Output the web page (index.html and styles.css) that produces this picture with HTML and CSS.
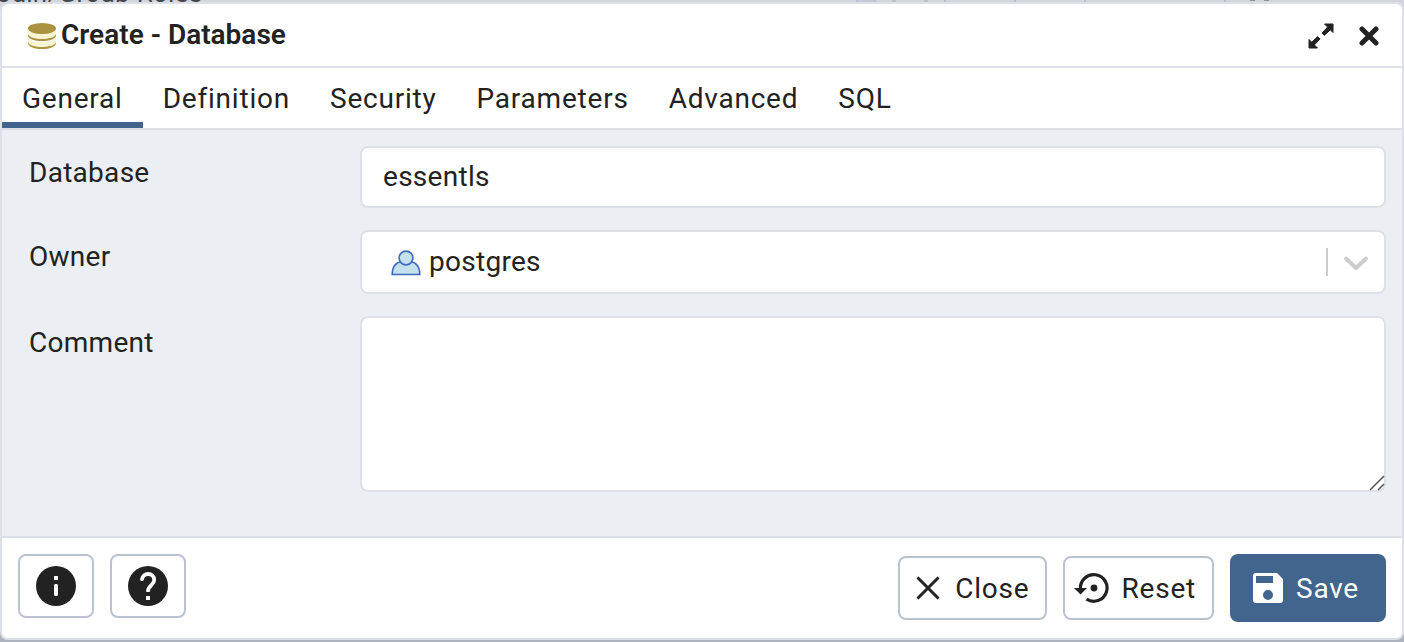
FILE: index.html
```html
<!DOCTYPE html>
<html lang="en">
<head>
  <meta charset="utf-8">
  <meta name="viewport" content="width=device-width, initial-scale=1">
  <title>Create - Database</title>
  <link rel="stylesheet" href="styles.css">
</head>
<body class="page">
  <div class="backdrop" aria-hidden="true">
    <span class="backdrop-node">Login/Group Roles</span>
    <svg class="backdrop-grid" width="480" height="2" viewBox="0 0 480 2">
      <path fill="#c2cad8" d="M16 0h20v2H16z"/>
      <path fill="#b9c0ca" d="M16 0h2v2h-2zM34 0h2v2h-2zM52 0h4v2h-4zM84 0h4v2h-4zM104 0h2v2h-2zM174 0h2v2h-2zM244 0h2v2h-2zM384 0h2v2h-2z"/>
      <path fill="#8d9299" d="M410 0h5v1h-5zM424 0h5v1h-5z"/>
    </svg>
  </div>

  <div class="dialog" role="dialog" aria-labelledby="dialog-title">
    <header class="dialog-header">
      <svg class="icon" width="28" height="26" viewBox="0 0 28 26" aria-hidden="true">
        <path fill="#f8f6d0" d="M0 5h28v15c0 3.500-6 6-14 6S0 23.500 0 20z"/>
        <path fill="#fff" d="M0 12.500c2 3.200 7 4.700 14 4.700s12-1.500 14-4.700v2.500c-2 3-7 4.300-14 4.300S2 18 0 15z"/>
        <path fill="#ab9240" d="M0 11.500c2 3 7 4.500 14 4.500s12-1.500 14-4.500v1.500c-1 3.300-6.500 5-14 5S1 16.300 0 13zM0 19.500c2 3 7 4.500 14 4.500s12-1.500 14-4.500v1c-1 3.500-6.500 5.500-14 5.500S1 24 0 20.500z"/>
        <ellipse cx="14" cy="5.500" rx="14" ry="5.500" fill="#ab9240"/>
      </svg>
      <h1 class="dialog-title" id="dialog-title">Create - Database</h1>
      <div class="window-actions">
        <button class="icon-button" type="button" aria-label="Maximize">
          <svg class="icon" width="26" height="26" viewBox="0 0 26 26" aria-hidden="true">
            <g fill="#222" stroke="#222" stroke-linejoin="round" stroke-width="1">
              <path d="M16.500 1H25v8.500l-2.700-2.700-6 5.600-2.300-2.300 5.600-6z"/>
              <path d="M9.500 25H1v-8.500l2.700 2.700 6-5.600 2.300 2.300-5.600 6z"/>
            </g>
          </svg>
        </button>
        <button class="icon-button" type="button" aria-label="Close dialog">
          <svg class="icon" width="20" height="20" viewBox="0 0 20 20" aria-hidden="true">
            <path fill="none" stroke="#222" stroke-width="5" stroke-linecap="round" d="m3 3 14 14M17 3 3 17"/>
          </svg>
        </button>
      </div>
    </header>

    <div class="tabs" role="tablist">
      <button class="tab tab-active" type="button" role="tab" aria-selected="true">General</button>
      <button class="tab" type="button" role="tab" aria-selected="false">Definition</button>
      <button class="tab" type="button" role="tab" aria-selected="false">Security</button>
      <button class="tab" type="button" role="tab" aria-selected="false">Parameters</button>
      <button class="tab" type="button" role="tab" aria-selected="false">Advanced</button>
      <button class="tab" type="button" role="tab" aria-selected="false">SQL</button>
    </div>

    <form class="form" id="database-form">
      <div class="field">
        <label class="label" for="database">Database</label>
        <input class="control text-control" id="database" type="text" value="essentls">
      </div>
      <div class="field">
        <label class="label" for="owner">Owner</label>
        <div class="control-wrap">
          <select class="control select-control" id="owner">
            <option>postgres</option>
          </select>
          <svg class="owner-icon" width="30" height="26" viewBox="0 0 30 26" aria-hidden="true">
            <g fill="#c5e1ee" stroke="#3f69be" stroke-width="1.600">
              <path d="M1.200 24.500C1.200 16 6 11 15 11s13.800 5 13.800 13.500z"/>
              <circle cx="15" cy="8" r="6.900"/>
            </g>
          </svg>
          <svg class="select-indicator" width="44" height="28" viewBox="0 0 44 28" aria-hidden="true">
            <path fill="#ccc" d="M0 0h2v28H0z"/>
            <path fill="none" stroke="#ccc" stroke-width="4" stroke-linecap="round" stroke-linejoin="round" d="m20 10.500 10 9.500 10-9.500"/>
          </svg>
        </div>
      </div>
      <div class="field">
        <label class="label" for="comment">Comment</label>
        <div class="control-wrap">
          <textarea class="control area-control" id="comment"></textarea>
          <svg class="resize-grip" width="16" height="16" viewBox="0 0 16 16" aria-hidden="true">
            <path fill="none" stroke="#555" stroke-width="1.500" d="M1 15 15 1M9 15l6-6"/>
          </svg>
        </div>
      </div>
    </form>

    <footer class="dialog-footer">
      <button class="button button-icon" type="button" aria-label="Information">
        <svg class="icon" width="40" height="40" viewBox="0 0 40 40" aria-hidden="true">
          <circle cx="20" cy="20" r="20" fill="#222"/>
          <path fill="#fff" d="M18 10h4v4h-4z"/>
          <rect x="18" y="18" width="4" height="12" rx="1.500" fill="#fff"/>
        </svg>
      </button>
      <button class="button button-icon" type="button" aria-label="Help">
        <svg class="icon" width="40" height="40" viewBox="0 0 40 40" aria-hidden="true">
          <circle cx="20" cy="20" r="20" fill="#222"/>
          <path fill="none" stroke="#fff" stroke-width="3.800" stroke-linecap="round" d="M14 13.200C14.500 10 17 8 20 8c3.600 0 6.200 2.600 6.200 6 0 5-6.200 5.700-6.200 11"/>
          <path fill="#222" d="M17 26h6v4h-6z"/>
          <path fill="#fff" d="M18 30h4v4h-4z"/>
        </svg>
      </button>
      <div class="footer-actions">
        <button class="button" type="button">
          <svg class="icon" width="24" height="24" viewBox="0 0 24 24" aria-hidden="true">
            <path fill="none" stroke="#222" stroke-width="3" d="m1.500 1.500 21 21M22.500 1.500l-21 21"/>
          </svg>
          <span class="button-text">Close</span>
        </button>
        <button class="button button-reset" type="reset" form="database-form">
          <svg class="icon" width="36" height="30" viewBox="0 0 36 30" aria-hidden="true">
            <path fill="none" stroke="#222" stroke-width="3.200" d="M6.500 16A13.300 13.300 0 1 1 12.500 26.100"/>
            <path fill="#222" d="M0 15h13l-6.500 6.500z"/>
            <circle cx="20" cy="15" r="3.400" fill="#222"/>
          </svg>
          <span class="button-text">Reset</span>
        </button>
        <button class="button button-primary" type="submit" form="database-form">
          <svg class="icon" width="30" height="30" viewBox="0 0 30 30" aria-hidden="true">
            <path fill="#fff" fill-rule="evenodd" d="M3 0h21l6 6v21a3 3 0 0 1-3 3H3a3 3 0 0 1-3-3V3a3 3 0 0 1 3-3zm0 3v7h17V3zm12 14a5 5 0 1 0 0 10 5 5 0 0 0 0-10z"/>
          </svg>
          <span class="button-text">Save</span>
        </button>
      </div>
    </footer>
  </div>
</body>
</html>
```
FILE: styles.css
```css
* {
  box-sizing: border-box;
}

.page {
  display: flex;
  min-height: 100vh;
  margin: 0;
  padding: 2px 0;
  background: linear-gradient(#d2d6dc, #adb4c0);
  color: #222;
  font: 28px/32px Roboto, sans-serif;
  letter-spacing: 0.01em;
}

.backdrop {
  position: absolute;
  inset: 0 0 auto;
  height: 4px;
  overflow: hidden;
}

.backdrop-node {
  position: absolute;
  bottom: -5px;
  left: -18px;
  color: #44474c;
  font-size: 26px;
}

.backdrop-grid {
  position: absolute;
  top: 0;
  left: 840px;
}

.dialog {
  position: relative;
  display: flex;
  flex: 1;
  flex-direction: column;
  min-width: 0;
  overflow: hidden;
  border: 2px solid #dde0e6;
  border-radius: 8px;
  background: #fff;
}

.icon {
  display: block;
  flex: none;
}

.dialog-header {
  display: flex;
  align-items: center;
  gap: 5px;
  padding: 16px 23px 14px 26px;
  border-bottom: 2px solid #dde0e6;
}

.dialog-title {
  margin: 0;
  padding-bottom: 2px;
  font-size: 28px;
  font-weight: 600;
  line-height: 30px;
  letter-spacing: 0;
}

.window-actions {
  display: flex;
  align-items: center;
  gap: 25px;
  margin-left: auto;
}

.icon-button {
  padding: 0;
  border: 0;
  background: none;
}

.tabs {
  display: flex;
  border-bottom: 2px solid #dde0e6;
}

.tab {
  padding: 15px 20px 7px;
  border: 0;
  border-bottom: 6px solid transparent;
  background: none;
  color: inherit;
  font: inherit;
  letter-spacing: 0.028em;
}

.tab-active {
  border-bottom-color: #41658c;
}

.form {
  display: flex;
  flex: 1;
  flex-direction: column;
  gap: 22px;
  padding: 16px 16px 44px;
  background: #ebeef3;
}

.field {
  display: grid;
  grid-template-columns: 1fr 3fr;
}

.label {
  padding: 11px;
}

.control-wrap {
  position: relative;
  display: flex;
}

.control {
  display: block;
  width: 100%;
  min-width: 0;
  margin: 0;
  border: 2px solid #dde0e6;
  border-radius: 8px;
  outline: 0;
  background: #fff;
  color: inherit;
  font: inherit;
  letter-spacing: inherit;
}

.text-control {
  height: 62px;
  padding: 0 21px 2px;
}

.select-control {
  height: 64px;
  padding: 0 64px 0 67px;
  appearance: none;
}

.owner-icon {
  position: absolute;
  top: 20px;
  left: 31px;
  pointer-events: none;
}

.select-indicator {
  position: absolute;
  top: 18px;
  right: 16px;
  pointer-events: none;
}

.area-control {
  height: 176px;
  padding: 14px 21px;
  resize: none;
}

.resize-grip {
  position: absolute;
  right: 1px;
  bottom: 1px;
  pointer-events: none;
}

.dialog-footer {
  display: flex;
  align-items: center;
  gap: 16px;
  padding: 16px;
  border-top: 2px solid #dde0e6;
}

.footer-actions {
  display: flex;
  align-items: center;
  gap: 16px;
  margin-left: auto;
}

.button {
  display: flex;
  align-items: center;
  justify-content: center;
  gap: 15px;
  height: 64px;
  padding: 0 16px;
  border: 2px solid #bac1d0;
  border-radius: 8px;
  background: #fff;
  color: inherit;
  font: inherit;
  letter-spacing: 0.028em;
}

.button-text {
  padding-top: 2px;
}

.button-icon {
  align-self: flex-start;
}

.button-reset {
  gap: 11px;
  padding: 0 16px 0 9px;
}

.button-primary {
  gap: 13px;
  height: 68px;
  padding: 0 27px 0 23px;
  border: 0;
  background: #41658c;
  color: #fff;
}
```
